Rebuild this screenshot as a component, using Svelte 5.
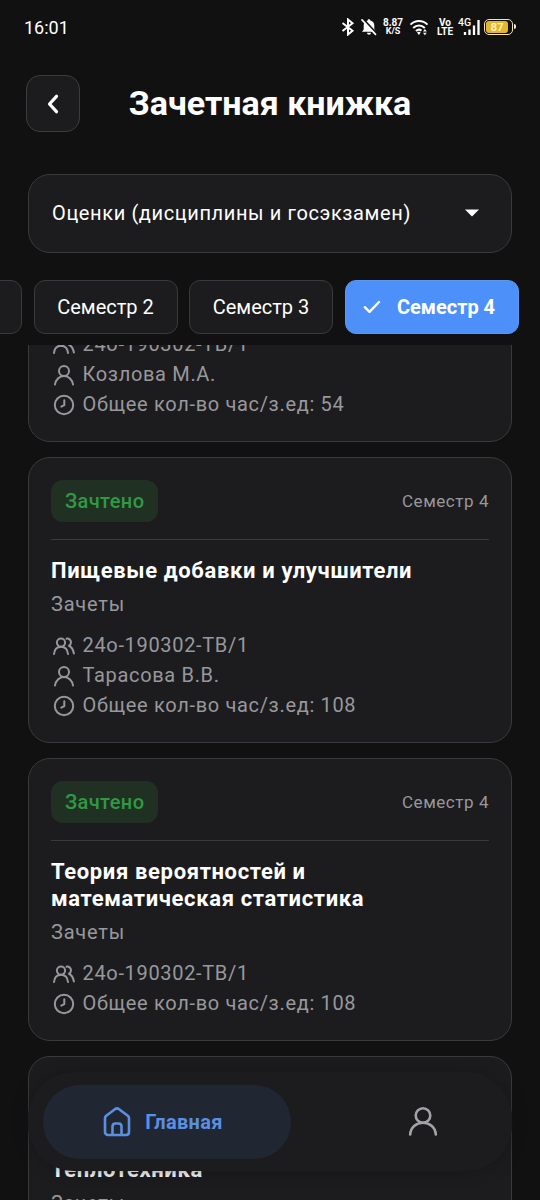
<script lang="ts">
	type IconName = 'group' | 'person' | 'clock';

	interface Card {
		status?: string;
		semester?: string;
		title?: string;
		type?: string;
		rows: { icon: IconName; text: string }[];
	}

	const semesters = [
		{ id: 1, label: '' },
		{ id: 2, label: 'Семестр 2' },
		{ id: 3, label: 'Семестр 3' },
		{ id: 4, label: 'Семестр 4' }
	];

	let selected = $state(4);

	const cards: Card[] = [
		{
			rows: [
				{ icon: 'group', text: '24о-190302-ТВ/1' },
				{ icon: 'person', text: 'Козлова М.А.' },
				{ icon: 'clock', text: 'Общее кол-во час/з.ед: 54' }
			]
		},
		{
			status: 'Зачтено',
			semester: 'Семестр 4',
			title: 'Пищевые добавки и улучшители',
			type: 'Зачеты',
			rows: [
				{ icon: 'group', text: '24о-190302-ТВ/1' },
				{ icon: 'person', text: 'Тарасова В.В.' },
				{ icon: 'clock', text: 'Общее кол-во час/з.ед: 108' }
			]
		},
		{
			status: 'Зачтено',
			semester: 'Семестр 4',
			title: 'Теория вероятностей и математическая статистика',
			type: 'Зачеты',
			rows: [
				{ icon: 'group', text: '24о-190302-ТВ/1' },
				{ icon: 'clock', text: 'Общее кол-во час/з.ед: 108' }
			]
		},
		{
			title: 'Теплотехника',
			type: 'Зачеты',
			rows: []
		}
	];
</script>

{#snippet icon(name: IconName)}
	<svg class="row-icon" width="24" height="24" viewBox="0 0 24 24">
		{#if name === 'group'}
			<circle cx="9" cy="8.6" r="4.1" />
			<path d="M2 20c.5-4.300 3.200-7.200 7-7.200s6.500 2.900 7 7.200" />
			<path d="M14.500 4.700c2.300-.6 4.500 1.200 4.500 3.600 0 1.500-.8 2.800-2.100 3.500 2.700 1.100 4.300 3.900 5 7.700" />
		{:else if name === 'person'}
			<circle cx="12" cy="8" r="5" />
			<path d="M3 21.500c.6-4.900 4.300-8.500 9-8.500s8.400 3.600 9 8.500" />
		{:else}
			<circle cx="12" cy="12" r="9.200" />
			<path d="M12.300 7.300v4.900l-3 1.400" />
		{/if}
	</svg>
{/snippet}

<div class="screen">
	<div class="status-bar">
		<span class="time">16:01</span>
		<div class="indicators">
			<svg class="bluetooth" width="14" height="18" viewBox="0 0 14 18">
				<path d="M1.500 5l10 7.800L7 16.500v-15l4.500 3.700L1.500 13" />
			</svg>
			<svg class="bell" width="16" height="18" viewBox="0 0 16 18">
				<path class="solid" d="M8 1.200c.8 0 1.300.5 1.300 1.200 2.600.6 4 2.500 4 5v4l1.700 2.400H1l1.700-2.400v-4c0-2.500 1.400-4.400 4-5 0-.7.5-1.200 1.300-1.200zM6 14.800h4c0 2.600-4 2.600-4 0z" />
				<path class="gap" d="M2.300 1.300l13 14" />
				<path class="line" d="M1 1.800l13.500 14.500" />
			</svg>
			<div class="stack speed"><span>8.87</span><span>K/S</span></div>
			<svg class="wifi" width="20" height="17" viewBox="0 0 20 17">
				<path d="M1.500 5.600C6.400.9 13.600.9 18.500 5.600M4.200 8.900c3.400-3.200 8.200-3.200 11.600 0M7 12c1.700-1.600 3.800-1.700 5.500-.4" />
				<path class="solid" d="M8 13.600c1.200-1 2.500-1 3.700 0L9.900 16zM14 12.500l1.900-2.400 1.900 2.400zM14 13.800l1.900 2.400 1.900-2.400z" />
			</svg>
			<div class="stack volte"><span>Vo</span><span>LTE</span></div>
			<div class="signal">
				<span>4G</span>
				<svg width="22" height="18" viewBox="0 0 22 18">
					<path d="M6 14v3M10.500 11.500V17M15 7.500V17M19.500 2v15" />
				</svg>
			</div>
			<div class="battery"><span class="level">87</span></div>
		</div>
	</div>

	<header>
		<button class="back" aria-label="Назад">
			<svg width="24" height="24" viewBox="0 0 24 24"><path d="M15.500 4.300L8.500 12l7 7.700" /></svg>
		</button>
		<h1>Зачетная книжка</h1>
	</header>

	<button class="select">
		<span>Оценки (дисциплины и госэкзамен)</span>
		<svg width="14" height="8" viewBox="0 0 14 8"><path d="M0 .5h14L7 7.500z" /></svg>
	</button>

	<div class="chips">
		{#each semesters as item (item.id)}
			<button class="chip" class:active={selected === item.id} onclick={() => (selected = item.id)}>
				{#if selected === item.id}
					<svg width="18" height="14" viewBox="0 0 18 14"><path d="M1.800 7.200l4.700 4.600L16 2" /></svg>
				{/if}
				{item.label}
			</button>
		{/each}
	</div>

	<main>
		<div class="list">
			{#each cards as card}
				<article class="card">
					{#if card.title}
						<div class="card-head">
							{#if card.status}
								<span class="badge">{card.status}</span>
								<span class="semester">{card.semester}</span>
							{/if}
						</div>
						<h2>{card.title}</h2>
						<p class="type">{card.type}</p>
					{/if}
					{#each card.rows as row}
						<div class="row">
							{@render icon(row.icon)}
							<span>{row.text}</span>
						</div>
					{/each}
				</article>
			{/each}
		</div>
	</main>

	<nav>
		<button class="tab current">
			<svg width="30" height="32" viewBox="0 0 30 32">
				<path d="M3 12.300c0-1 .4-1.800 1.200-2.500l8.700-6.600c1.300-1 2.900-1 4.200 0l8.700 6.600c.8.700 1.200 1.500 1.200 2.500V26c0 1.700-1.300 3-3 3H6c-1.700 0-3-1.300-3-3zM10.500 29V20.500c0-1.700 1.300-3 3-3h3c1.700 0 3 1.300 3 3V29" />
			</svg>
			<span>Главная</span>
		</button>
		<button class="tab" aria-label="Профиль">
			<svg width="30" height="32" viewBox="0 0 30 32">
				<circle cx="15" cy="9.500" r="7.300" />
				<path d="M2.200 28.500c.4-7 5.900-11.700 12.800-11.700s12.400 4.700 12.800 11.700" />
			</svg>
		</button>
	</nav>
</div>

<style>
	:global(body) {
		background: #111112;
	}

	.screen {
		position: relative;
		box-sizing: border-box;
		width: 540px;
		height: 1200px;
		display: flex;
		flex-direction: column;
		overflow: hidden;
		background: #111112;
		color: #fff;
		font-family: Roboto, 'Noto Sans', sans-serif;
	}

	button {
		padding: 0;
		border: none;
		background: none;
		color: inherit;
		font: inherit;
		box-sizing: border-box;
		flex-shrink: 0;
	}

	svg {
		display: block;
		flex-shrink: 0;
		fill: none;
		stroke: currentColor;
		stroke-width: 2;
		stroke-linecap: round;
		stroke-linejoin: round;
	}

	.status-bar {
		display: flex;
		align-items: center;
		justify-content: space-between;
		height: 54px;
		padding: 0 27px 0 24px;
		flex-shrink: 0;
	}

	.time {
		font-size: 18px;
		line-height: 20px;
		padding-top: 2px;
	}

	.indicators {
		display: flex;
		align-items: center;
	}

	.bluetooth {
		margin-right: 6px;
		stroke-linecap: butt;
		stroke-linejoin: miter;
	}

	.bell {
		margin-right: 6px;
	}

	.solid {
		fill: currentColor;
		stroke: none;
	}

	.bell .gap {
		stroke: #111112;
	}

	.bell .line {
		stroke-width: 1.7;
	}

	.stack {
		display: flex;
		flex-direction: column;
		align-items: center;
		font-size: 10px;
		line-height: 9px;
		font-weight: 700;
	}

	.speed {
		width: 20px;
		margin-right: 6px;
	}

	.speed span:last-child {
		font-size: 9px;
	}

	.wifi {
		margin-right: 8px;
		stroke-linecap: butt;
	}

	.volte {
		width: 16px;
		margin-right: 6px;
	}

	.signal {
		position: relative;
		margin-right: 3px;
	}

	.signal span {
		position: absolute;
		left: -1px;
		top: 0;
		font-size: 10.5px;
		line-height: 9px;
		font-weight: 500;
	}

	.signal svg {
		stroke-width: 2.3;
		stroke-linecap: butt;
	}

	.battery {
		position: relative;
		box-sizing: border-box;
		width: 29px;
		height: 16px;
		padding: 1px;
		border: 1px solid #f3e3b0;
		border-radius: 5px;
	}

	.battery::after {
		content: '';
		position: absolute;
		right: -4px;
		top: 4px;
		width: 2px;
		height: 5px;
		border-radius: 0 2px 2px 0;
		background: #eee;
	}

	.level {
		display: block;
		width: 22px;
		height: 12px;
		border-radius: 3px;
		background: #e3b530;
		color: #fff0b8;
		font-size: 11.5px;
		line-height: 12px;
		font-weight: 700;
		text-align: center;
	}

	header {
		display: flex;
		align-items: center;
		height: 99px;
		padding: 0 26px;
		flex-shrink: 0;
	}

	.back {
		display: flex;
		align-items: center;
		justify-content: center;
		width: 54px;
		height: 57px;
		border: 1px solid #3c3c3e;
		border-radius: 14px;
		background: #1c1c1e;
	}

	.back svg {
		stroke-width: 3.2;
	}

	h1 {
		flex: 1;
		margin: 0 54px 1px 0;
		text-align: center;
		font-size: 34px;
		line-height: 40px;
		font-weight: 700;
	}

	.select {
		display: flex;
		align-items: center;
		justify-content: space-between;
		height: 79px;
		margin: 20.5px 28px 0;
		padding: 0 32px 0 23px;
		border: 1px solid #3a3a3c;
		border-radius: 22px;
		background: #1c1c1e;
		font-size: 20px;
		letter-spacing: 0.62px;
	}

	.select svg {
		fill: currentColor;
		stroke: none;
	}

	.chips {
		display: flex;
		justify-content: flex-end;
		gap: 11.5px;
		margin-top: 27.5px;
		padding-right: 21.5px;
		flex-shrink: 0;
	}

	.chip {
		display: flex;
		align-items: center;
		justify-content: center;
		width: 144px;
		height: 54px;
		border: 1px solid #3a3a3c;
		border-radius: 11px;
		background: #1c1c1e;
		font-size: 20px;
	}

	.chip.active {
		width: 174px;
		gap: 16px;
		padding-right: 5px;
		border-color: #5a97ee;
		background: #4d90f9;
		font-weight: 700;
	}

	.chip svg {
		stroke-width: 2.4;
	}

	main {
		flex: 1;
		min-height: 0;
		margin-top: 11px;
		overflow: hidden;
	}

	.list {
		display: flex;
		flex-direction: column;
		gap: 15px;
		margin-top: -39.5px;
		padding: 0 28px;
	}

	.card {
		box-sizing: border-box;
		padding: 22px;
		border: 1px solid #3a3a3c;
		border-radius: 22px;
		background: #1c1c1e;
	}

	.card-head {
		display: flex;
		align-items: center;
		justify-content: space-between;
		height: 42px;
		padding-bottom: 17.5px;
		border-bottom: 1px solid #3a3a3c;
	}

	.badge {
		padding: 0 14px;
		border-radius: 12px;
		background: #203124;
		color: #2f9a41;
		font-size: 20px;
		line-height: 42px;
		font-weight: 500;
		letter-spacing: 0.4px;
	}

	.semester {
		color: #98989c;
		font-size: 17px;
		letter-spacing: 0.55px;
	}

	h2 {
		margin: 17px 0 0;
		font-size: 22px;
		line-height: 27px;
		font-weight: 700;
		letter-spacing: 0.64px;
	}

	.type {
		margin: 7.5px 0 14px;
		color: #98989c;
		font-size: 20px;
		line-height: 24px;
		letter-spacing: 0.8px;
	}

	.row {
		display: flex;
		align-items: center;
		gap: 7px;
		height: 30px;
		padding-left: 0.5px;
		color: #98989c;
		font-size: 20px;
		letter-spacing: 0.67px;
		white-space: nowrap;
	}

	.row-icon {
		margin-top: 2px;
	}

	nav {
		position: absolute;
		left: 28px;
		right: 28px;
		top: 1072px;
		box-sizing: border-box;
		display: flex;
		height: 99px;
		padding: 13px 15px 12px;
		border-radius: 46px;
		background: #1c1c1e;
		box-shadow: 0 0 14px rgba(17, 17, 22, 0.5);
	}

	.tab {
		display: flex;
		align-items: center;
		justify-content: center;
		gap: 13px;
		width: 248px;
		height: 74px;
		border-radius: 37px;
		color: #a3a3a7;
	}

	.tab + .tab {
		width: auto;
		flex: 1;
		padding-left: 58px;
	}

	.tab.current {
		padding-right: 9px;
		background: #202733;
		color: #5b8fe0;
		font-size: 20px;
		font-weight: 700;
		letter-spacing: 0.3px;
	}

	.tab svg {
		stroke-width: 2.6;
	}
</style>
